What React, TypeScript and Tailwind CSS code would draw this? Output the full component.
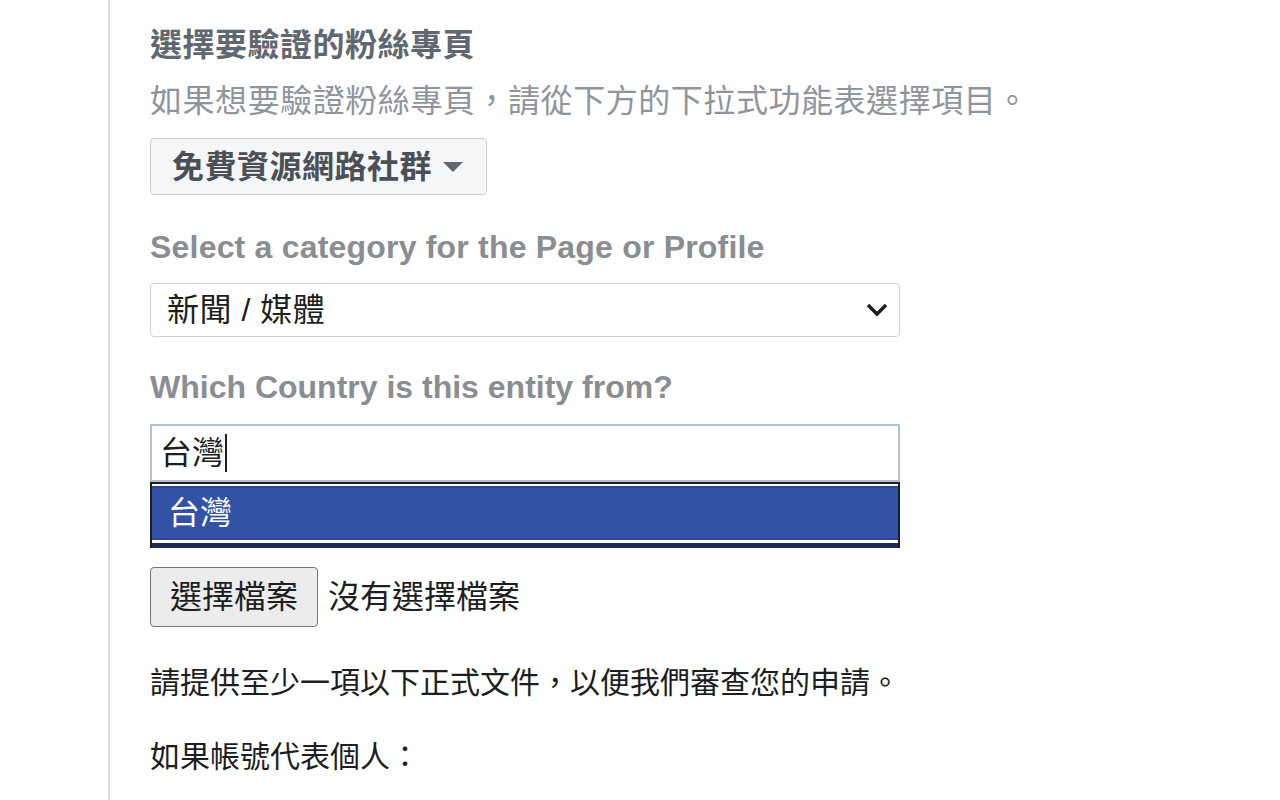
export default function App() {
  const font = { fontFamily: '"Liberation Sans", "Noto Sans CJK TC", sans-serif' };
  return (
    <div className="h-[800px] w-[1280px] overflow-hidden bg-white pl-[108px]" style={font}>
      <div className="h-full border-l-2 border-[#dadde1] pl-[40px] pt-[25px]">
        <h2 className="text-[32px] font-bold leading-[40px] tracking-[0.5px] text-[#606770]">選擇要驗證的粉絲專頁</h2>
        <p className="mt-[16px] text-[32px] leading-[40px] tracking-[0.55px] text-[#90949c]">
          如果想要驗證粉絲專頁，請從下方的下拉式功能表選擇項目。
        </p>

        <button className="mt-[17px] flex h-[57px] items-center gap-[11px] rounded-[4px] border border-[#ccd0d5] bg-[#f5f6f7] pl-[21px] pr-[23px] text-[32px] font-bold tracking-[0.5px] text-[#4b4f56]">
          <span>免費資源網路社群</span>
          <svg width="20" height="10" viewBox="0 0 20 10">
            <path d="M0 0 H20 L10 10 Z" fill="#606770" />
          </svg>
        </button>

        <div className="mt-[34px] text-[32px] font-bold leading-[36px] tracking-[0.2px] text-[#8a8d91]">
          Select a category for the Page or Profile
        </div>
        <div className="mt-[18px] flex h-[54px] w-[750px] items-center justify-between rounded-[4px] border border-[#ccd0d5] pl-[16px] pr-[11px]">
          <span className="text-[32px] tracking-[0.5px] text-[#1c1e21]">新聞 / 媒體</span>
          <svg width="22" height="14" viewBox="0 0 22 14">
            <path d="M2 2 L11 11 L20 2" fill="none" stroke="#1c1e21" strokeWidth="3.5" />
          </svg>
        </div>

        <div className="mt-[32px] text-[32px] font-bold leading-[36px] text-[#8a8d91]">
          Which Country is this entity from?
        </div>
        <div className="mt-[19px] w-[750px]">
          <div className="flex h-[58px] items-center border-2 border-[#b4bfcf] pl-[8px]">
            <span className="text-[32px] text-[#1c1e21]">台灣</span>
            <span className="ml-[1px] h-[38px] w-[2px] bg-[#1c1e21]" />
          </div>
          <div className="border-2 border-b-0 border-[#1c1e21] bg-white pt-[2px]">
            <div className="flex h-[54px] items-center border-y-2 border-y-[#2a478f] bg-[#3253a5] pl-[16px] text-[32px] text-white">
              台灣
            </div>
            <div className="h-[3px] bg-white" />
            <div className="h-[5px] bg-[#1e2a52]" />
          </div>
        </div>

        <div className="mt-[19px] flex items-center gap-[10px]">
          <button className="h-[60px] rounded-[4px] border border-[#767676] bg-[#ececec] px-[19px] text-[32px] text-[#1c1e21]">
            選擇檔案
          </button>
          <span className="text-[32px] text-[#1c1e21]">沒有選擇檔案</span>
        </div>

        <p className="mt-[36px] text-[30px] leading-[40px] text-[#1c1e21]">
          請提供至少一項以下正式文件，以便我們審查您的申請。
        </p>
        <p className="mt-[34px] text-[30px] leading-[40px] text-[#1c1e21]">如果帳號代表個人：</p>
      </div>
    </div>
  );
}
